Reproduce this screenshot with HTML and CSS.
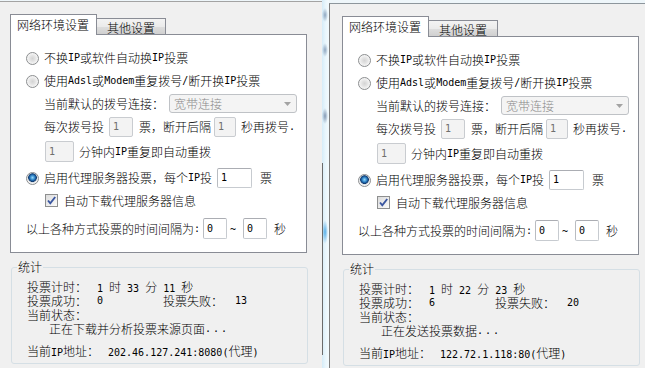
FILE: index.html
```html
<!DOCTYPE html>
<html lang="zh-CN">
<head>
<meta charset="utf-8">
<title>投票设置</title>
<link rel="stylesheet" href="styles.css">
</head>
<body>
<div class="win win-left">
  <div class="tabs">
    <div class="tab active">网络环境设置</div>
    <div class="tab">其他设置</div>
  </div>
  <div class="panel">
    <div class="row r1"><span class="radio"></span>不换<span class="a">IP</span>或软件自动换<span class="a">IP</span>投票</div>
    <div class="row r2"><span class="radio"></span>使用<span class="a">Adsl</span>或<span class="a">Modem</span>重复拨号<span class="a">/</span>断开换<span class="a">IP</span>投票</div>
    <div class="row r3 indent">当前默认的拨号连接：<div class="combo"><span>宽带连接</span><svg width="7" height="4" viewBox="0 0 7 4"><path d="M0 0h7L3.5 4z" fill="#a3a3a3"/></svg></div></div>
    <div class="row r4 indent">每次拨号投<span class="box dis w1">1</span>票，断开后隔<span class="box dis w2">1</span>秒再拨号<span class="a">.</span></div>
    <div class="row r5 indent"><span class="box dis tall w3">1</span>分钟内<span class="a">IP</span>重复即自动重拨</div>
    <div class="row r6"><span class="radio on"></span>启用代理服务器投票，每个<span class="a">IP</span>投<span class="box w4">1</span>票</div>
    <div class="row r7 indent"><span class="check"><svg width="11" height="11" viewBox="0 0 11 11"><path d="M2 5.5l2.3 2.8L9.2 2" fill="none" stroke="#3a56a0" stroke-width="1.9"/></svg></span>自动下载代理服务器信息</div>
    <div class="row r8">以上各种方式投票的时间间隔为<span class="a">:</span><span class="box tall w5">0</span><span class="a tilde">~</span><span class="box tall w5">0</span>秒</div>
  </div>
  <div class="group">
    <div class="group-title">统计</div>
    <div class="stat"><span class="k">投票计时：</span><span class="v"><span class="a">1 </span>时<span class="a"> 33 </span>分<span class="a"> 11 </span>秒</span></div>
    <div class="stat"><span class="k">投票成功：</span><span class="v v1 a">0</span><span class="k2">投票失败：</span><span class="v a">13</span></div>
    <div class="stat"><span class="k">当前状态：</span></div>
    <div class="stat status">正在下载并分析投票来源页面<span class="a dots">...</span></div>
    <div class="stat ip"><span class="k kip">当前<span class="a">IP</span>地址：</span><span class="v"><span class="a">202.46.127.241:8080(</span>代理<span class="a">)</span></span></div>
  </div>
</div>
<div class="sep"></div>
<div class="win win-right">
  <div class="tabs">
    <div class="tab active">网络环境设置</div>
    <div class="tab">其他设置</div>
  </div>
  <div class="panel">
    <div class="row r1"><span class="radio"></span>不换<span class="a">IP</span>或软件自动换<span class="a">IP</span>投票</div>
    <div class="row r2"><span class="radio"></span>使用<span class="a">Adsl</span>或<span class="a">Modem</span>重复拨号<span class="a">/</span>断开换<span class="a">IP</span>投票</div>
    <div class="row r3 indent">当前默认的拨号连接：<div class="combo"><span>宽带连接</span><svg width="7" height="4" viewBox="0 0 7 4"><path d="M0 0h7L3.5 4z" fill="#a3a3a3"/></svg></div></div>
    <div class="row r4 indent">每次拨号投<span class="box dis w1">1</span>票，断开后隔<span class="box dis w2">1</span>秒再拨号<span class="a">.</span></div>
    <div class="row r5 indent"><span class="box dis tall w3">1</span>分钟内<span class="a">IP</span>重复即自动重拨</div>
    <div class="row r6"><span class="radio on"></span>启用代理服务器投票，每个<span class="a">IP</span>投<span class="box w4">1</span>票</div>
    <div class="row r7 indent"><span class="check"><svg width="11" height="11" viewBox="0 0 11 11"><path d="M2 5.5l2.3 2.8L9.2 2" fill="none" stroke="#3a56a0" stroke-width="1.9"/></svg></span>自动下载代理服务器信息</div>
    <div class="row r8">以上各种方式投票的时间间隔为<span class="a">:</span><span class="box tall w5">0</span><span class="a tilde">~</span><span class="box tall w5">0</span>秒</div>
  </div>
  <div class="group">
    <div class="group-title">统计</div>
    <div class="stat"><span class="k">投票计时：</span><span class="v"><span class="a">1 </span>时<span class="a"> 22 </span>分<span class="a"> 23 </span>秒</span></div>
    <div class="stat"><span class="k">投票成功：</span><span class="v v1 a">6</span><span class="k2">投票失败：</span><span class="v a">20</span></div>
    <div class="stat"><span class="k">当前状态：</span></div>
    <div class="stat status">正在发送投票数据<span class="a dots">...</span></div>
    <div class="stat ip"><span class="k kip">当前<span class="a">IP</span>地址：</span><span class="v"><span class="a">122.72.1.118:80(</span>代理<span class="a">)</span></span></div>
  </div>
</div>
</body>
</html>
```

FILE: styles.css
```css
html, body {
  margin: 0;
  padding: 0;
}
body {
  width: 645px;
  height: 368px;
  overflow: hidden;
  display: flex;
  align-items: flex-start;
  background: #eef6fa;
  font-family: "Noto Sans CJK SC", sans-serif;
  font-weight: 300;
  font-size: 12px;
  color: #000;
}
.a {
  font-family: "DejaVu Sans Mono", monospace;
  font-weight: 400;
  font-size: 10px;
}
.win {
  background: #f0f0f0;
  height: 380px;
  box-sizing: border-box;
  flex: none;
}
.win-left {
  width: 322px;
  margin-top: 1px;
  border-top: 1px solid #a3a3a3;
  padding: 12px 0 0 10px;
}
.win-right {
  width: 316px;
  margin-top: 3px;
  border-top: 1px solid #8d969c;
  border-left: 1px solid #7d7d7d;
  padding: 12px 0 0 12px;
}
.sep {
  width: 7px;
  height: 368px;
  flex: none;
  background:
    linear-gradient(#6b6b6b, #6b6b6b) no-repeat 0 163px / 1px 192px,
    radial-gradient(ellipse 3px 7px at 3px 15px, #8ea6c0, transparent) no-repeat,
    radial-gradient(ellipse 3px 7px at 3px 50px, #8ea6c0, transparent) no-repeat,
    radial-gradient(ellipse 3px 8px at 3px 116px, #8499b4, transparent) no-repeat,
    radial-gradient(ellipse 3px 12px at 3px 232px, #55aee8, transparent) no-repeat,
    linear-gradient(to right, #d6ecf8, #e9f6fc 50%, #f4fbfe);
}

/* tabs */
.tabs {
  display: flex;
  align-items: flex-end;
  height: 20px;
  position: relative;
  z-index: 1;
}
.tab {
  box-sizing: border-box;
  border: 1px solid #898c95;
  border-bottom: none;
  line-height: 14px;
}
.tab.active {
  width: 87px;
  height: 21px;
  margin-bottom: -1px;
  background: #fff;
  padding: 3px 0 0 6px;
}
.tab:not(.active) {
  width: 69px;
  height: 16px;
  padding: 2px 0 0 10px;
  border-left: none;
  background: linear-gradient(#f3f3f3, #ebebeb 50%, #dedede 51%, #d0d0d0);
}

/* panel */
.panel {
  box-sizing: border-box;
  width: 297px;
  height: 219px;
  border: 1px solid #898c95;
  background: #fff;
  padding-top: 13px;
}
.row {
  display: flex;
  align-items: center;
  height: 20px;
  white-space: nowrap;
  line-height: 14px;
}
.r2, .r3, .r7 { margin-top: 3px; }
.r3, .r7 { height: 19px; }
.r4, .r5 { margin-top: 4px; }
.r5, .r8 { height: 21px; }
.r6 { margin-top: 6px; }
.r8 { margin-top: 8px; padding-left: 15px; }
.indent { padding-left: 33px; }

.radio {
  box-sizing: border-box;
  width: 13px;
  height: 13px;
  border-radius: 50%;
  border: 1px solid #8c8e90;
  margin: 0 5px 0 15px;
  background: radial-gradient(circle at 50% 50%, #d4d4d4 0, #e2e2e2 2.5px, #f6f6f6 5.5px);
  flex: none;
}
.radio.on {
  background: radial-gradient(circle at 50% 42%, #9fd6f7 0, #4aa2dc 1.6px, #1e64a8 3px, #123a6e 4px, #cfd6dc 4.6px, #f4f4f4 5.5px);
}
.check {
  box-sizing: border-box;
  width: 13px;
  height: 13px;
  border: 1px solid #8e8f8f;
  margin: 0 6px 0 1px;
  background: linear-gradient(135deg, #dcdcdc, #fbfbfb);
  display: flex;
  align-items: center;
  justify-content: center;
  flex: none;
}

.combo {
  box-sizing: border-box;
  width: 128px;
  height: 19px;
  margin-left: 5px;
  border: 1px solid #bfc2c6;
  border-radius: 3px;
  background: #f4f4f4;
  color: #8a8a8a;
  display: flex;
  align-items: center;
  justify-content: space-between;
  padding: 0 5px 0 4px;
}

.box {
  box-sizing: border-box;
  display: inline-block;
  height: 20px;
  border: 1px solid #c7cbd0;
  border-top-color: #abadb3;
  border-left-color: #b9bcc1;
  border-radius: 2px;
  background: #fff;
  font-family: "DejaVu Sans Mono", monospace;
  font-weight: 400;
  font-size: 10px;
  line-height: 12px;
  padding: 3px 0 0 3px;
  flex: none;
}
.box.tall { height: 21px; padding-top: 4px; }
.box.dis {
  background: #f3f3f3;
  color: #6f6f6f;
  border-color: #c9ccd0;
}
.w1 { width: 24px; margin: 0 6px 0 5px; }
.w2 { width: 22px; margin: 0 5px 0 3px; }
.w3 { width: 29px; margin: 0 5px 0 1px; }
.w4 { width: 35px; margin: 0 8px 0 5px; }
.w5 { width: 24px; margin: 0 3px 0 3px; }
.r8 .box:last-of-type { margin-right: 7px; }
.tilde { margin: 3px 4px 0 0; }

/* statistics group */
.group {
  position: relative;
  box-sizing: border-box;
  width: 297px;
  height: 97px;
  margin: 14px 0 0 1px;
  border: 1px solid #d5dfe5;
  border-radius: 3px;
  padding: 12px 0 5px 15px;
}
.group-title {
  position: absolute;
  left: 5px;
  top: -8px;
  line-height: 14px;
  padding: 0 1px;
  background: #f0f0f0;
}
.stat {
  display: flex;
  height: 14px;
  line-height: 14px;
  white-space: nowrap;
}
.k { width: 70px; flex: none; }
.kip { width: 81px; }
.v1 { width: 66px; flex: none; }
.k2 { width: 72px; flex: none; }
.status { padding-left: 22px; }
.dots { letter-spacing: 2px; }
.ip { margin-top: 8px; }
```
